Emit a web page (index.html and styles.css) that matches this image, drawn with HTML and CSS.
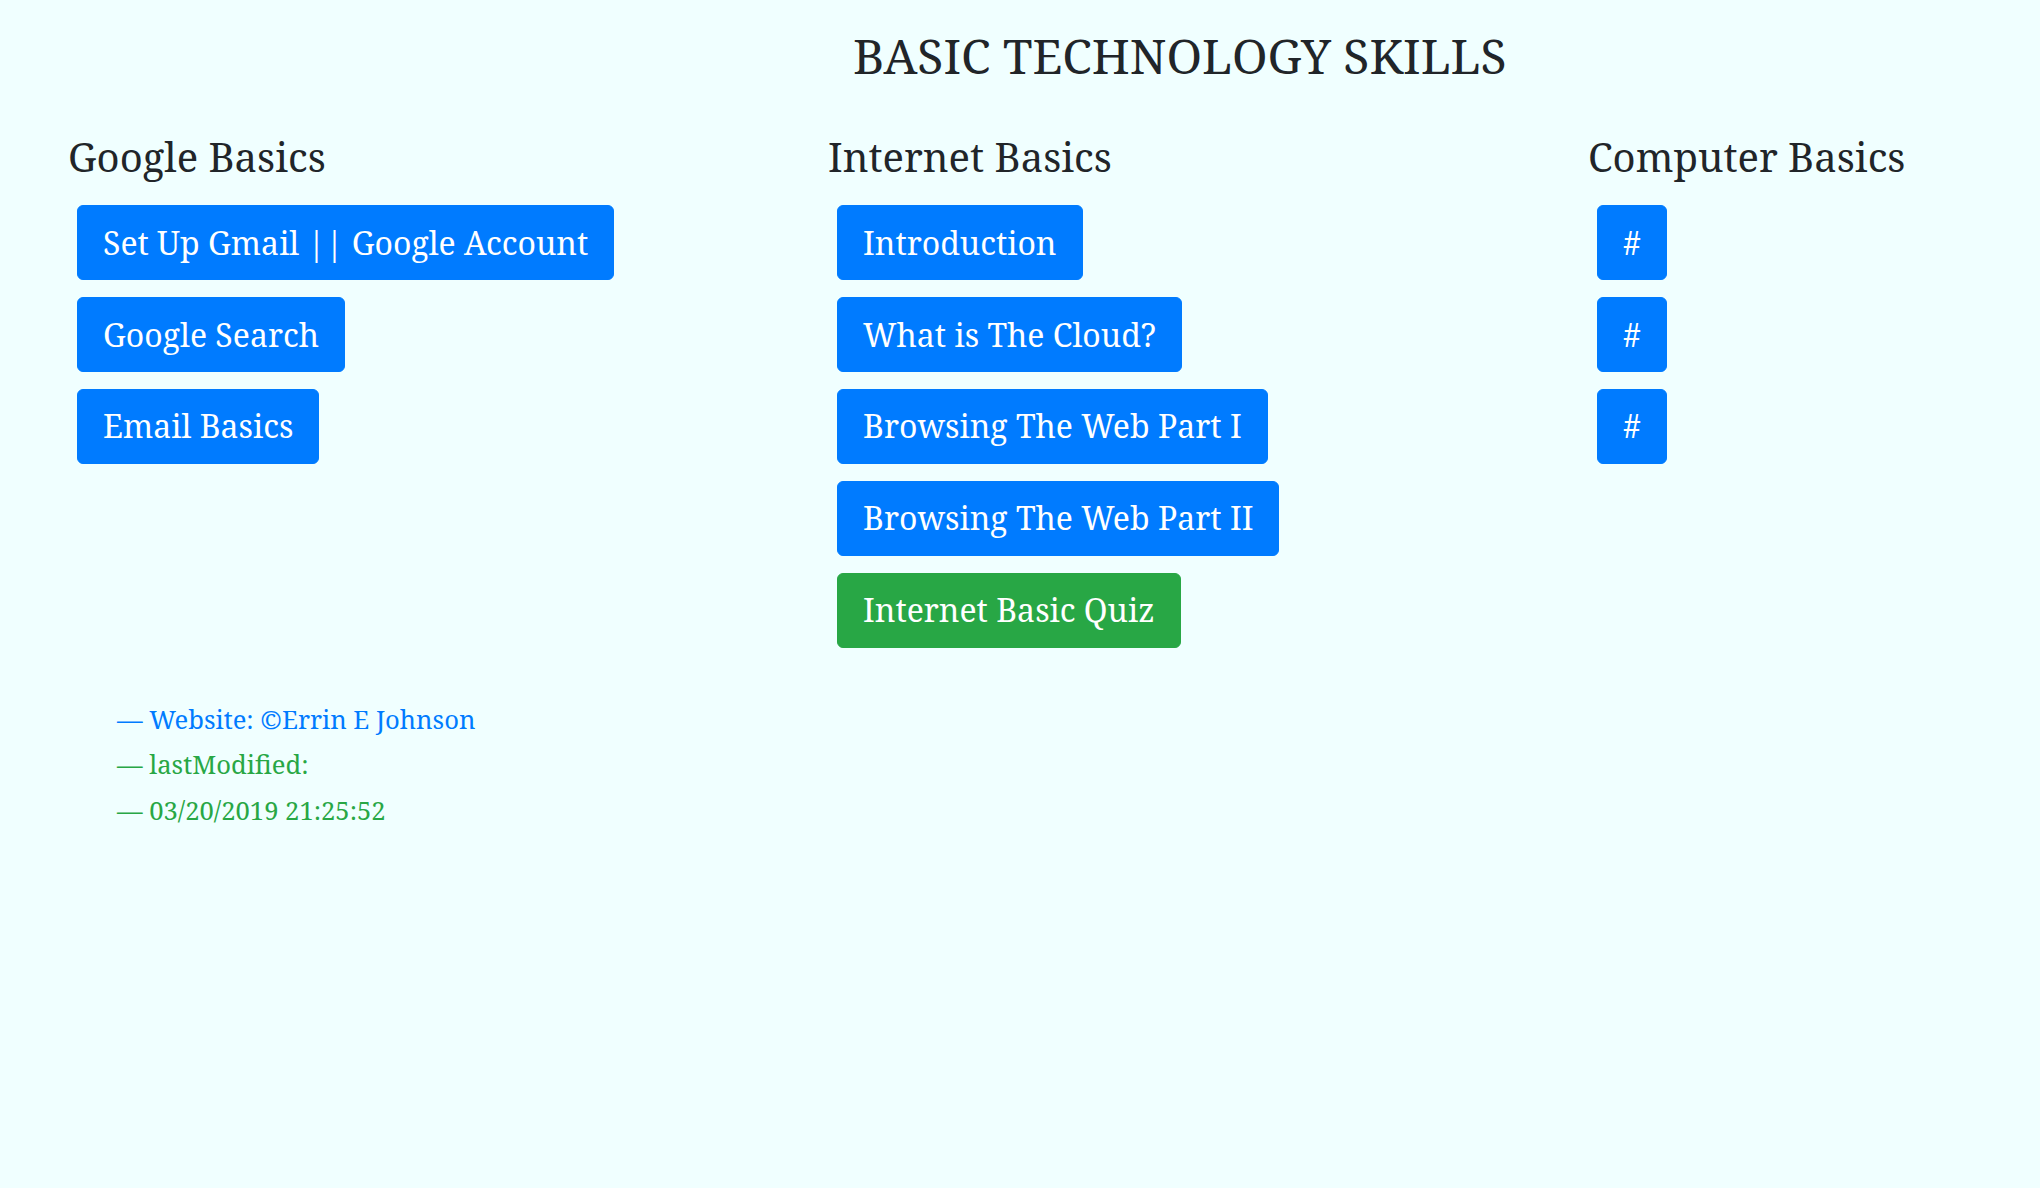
FILE: index.html
```html
<!DOCTYPE html>
<html lang="en">
<head>
<meta charset="utf-8">
<title>Basic Technology Skills</title>
<link rel="stylesheet" href="styles.css">
</head>
<body>
  <header class="masthead">
    <h1 class="title">BASIC TECHNOLOGY SKILLS</h1>
  </header>
  <main class="columns">
    <section class="column">
      <h3 class="column-title">Google Basics</h3>
      <nav class="btn-list">
        <a class="btn btn-primary" href="#">Set Up Gmail || Google Account</a>
        <a class="btn btn-primary" href="#">Google Search</a>
        <a class="btn btn-primary" href="#">Email Basics</a>
      </nav>
    </section>
    <section class="column">
      <h3 class="column-title">Internet Basics</h3>
      <nav class="btn-list">
        <a class="btn btn-primary" href="#">Introduction</a>
        <a class="btn btn-primary" href="#">What is The Cloud?</a>
        <a class="btn btn-primary" href="#">Browsing The Web Part I</a>
        <a class="btn btn-primary" href="#">Browsing The Web Part II</a>
        <a class="btn btn-success" href="#">Internet Basic Quiz</a>
      </nav>
    </section>
    <section class="column column-last">
      <h3 class="column-title">Computer Basics</h3>
      <nav class="btn-list">
        <a class="btn btn-primary" href="#">#</a>
        <a class="btn btn-primary" href="#">#</a>
        <a class="btn btn-primary" href="#">#</a>
      </nav>
    </section>
  </main>
  <footer class="site-footer">
    <p class="foot-line text-primary">Website: ©Errin E Johnson</p>
    <p class="foot-line text-success">lastModified:</p>
    <p class="foot-line text-success">03/20/2019 21:25:52</p>
  </footer>
</body>
</html>
```

FILE: styles.css
```css
html, body {
  margin: 0;
  padding: 0;
}
body {
  background: #f0ffff;
  color: #212529;
  font-family: "Noto Serif", "DejaVu Serif", serif;
  font-size: 32px;
  overflow: hidden;
}
.masthead {
  padding-top: 27px;
  padding-left: 853px;
}
.title {
  margin: 0;
  font-size: 48px;
  font-weight: 400;
  line-height: 57.6px;
}
.columns {
  display: flex;
  padding-left: 68px;
  margin-top: 48.5px;
}
.column {
  flex: 0 0 760px;
  display: flex;
  flex-direction: column;
}
.column-last {
  flex: 1 1 auto;
}
.column-title {
  margin: 0;
  font-size: 40px;
  font-weight: 400;
  line-height: 48px;
}
.btn-list {
  display: flex;
  flex-direction: column;
  align-items: flex-start;
  gap: 16.8px;
  margin-top: 24.3px;
  padding-left: 9px;
}
.btn {
  display: inline-block;
  color: #fff;
  text-decoration: none;
  font-size: 32px;
  line-height: 48px;
  padding: 12.5px 25px;
  border: 1px solid transparent;
  border-radius: 6px;
  white-space: nowrap;
}
.btn-primary {
  background: #007bff;
  border-color: #007bff;
}
.btn-success {
  background: #28a745;
  border-color: #28a745;
}
.site-footer {
  margin-top: 49.3px;
  padding-left: 117px;
}
.foot-line {
  margin: 0;
  font-size: 25.6px;
  line-height: 45.6px;
}
.foot-line::before {
  content: "\2014\00A0";
}
.text-primary {
  color: #007bff;
}
.text-success {
  color: #28a745;
}
```
